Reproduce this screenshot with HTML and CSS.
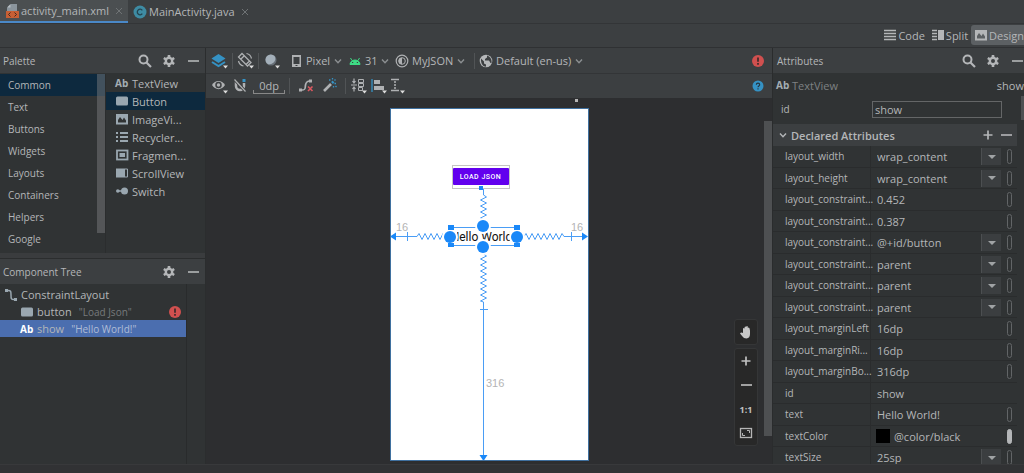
FILE: index.html
```html
<!DOCTYPE html>
<html lang="en">
<head>
  <meta charset="UTF-8" />
  <meta name="viewport" content="width=device-width, initial-scale=1.0"/>
  <title>activity_main.xml</title>
  <link rel="stylesheet" href="styles.css">
</head>
<body>
  <!-- shared icons -->
  <svg class="sprite" aria-hidden="true">
    <symbol id="search" viewBox="0 0 14 14"><circle cx="5.5" cy="5.5" r="4" fill="none" stroke="currentColor" stroke-width="2"/><path d="M8.5 8.5L13 13" stroke="currentColor" stroke-width="2.2"/></symbol>
    <symbol id="gear" viewBox="0 0 14 14"><path d="M7 3.500v-2.500M7 10.500v2.500M4 5.300L1.800 4M10 8.700l2.200 1.300M4 8.700L1.800 10M10 5.300L12.200 4" stroke="currentColor" stroke-width="2.6"/><circle cx="7" cy="7" r="3.2" fill="none" stroke="currentColor" stroke-width="2.4"/></symbol>
    <symbol id="minus" viewBox="0 0 14 14"><path d="M2 7h11" stroke="currentColor" stroke-width="1.6"/></symbol>
    <symbol id="plus" viewBox="0 0 14 14"><path d="M2.5 7h9M7 2.5v9" stroke="currentColor" stroke-width="1.7"/></symbol>
    <symbol id="chevron" viewBox="0 0 8 8"><path d="M1 2.5L4 5.8 7 2.5" fill="none" stroke="currentColor" stroke-width="1.4"/></symbol>
    <symbol id="close" viewBox="0 0 8 8"><path d="M1 1l6 6M7 1L1 7" stroke="currentColor" stroke-width="1"/></symbol>
    <symbol id="rect" viewBox="0 0 14 14"><rect x="1" y="2.5" width="12" height="9" rx="1.5" fill="currentColor"/></symbol>
    <symbol id="image" viewBox="0 0 14 14"><path fill-rule="evenodd" fill="currentColor" d="M1 2h12v10.500H1zM3 10.500h8V8.500L9 5.500 7.500 8 5 5 3 8z"/></symbol>
    <symbol id="error" viewBox="0 0 12 12"><circle cx="6" cy="6" r="6" fill="#d0504f"/><path d="M6 2.500v4.300M6 8v1.700" stroke="#3c2a2b" stroke-width="1.700"/></symbol>
  </svg>

  <nav class="tabs">
    <a href="#" class="tab active">
      <svg class="icon" viewBox="0 0 14 14"><path d="M6 0h6v7H2V4z" fill="#8a949c"/><path d="M2 3.500L5.500 0v3.500z" fill="#b4bcc2"/><rect x="1" y="7" width="13" height="7" fill="#c75f34"/><path d="M5.500 8.500L3.500 10.500l2 2M9.500 8.500l2 2-2 2" fill="none" stroke="#3c2a22"/></svg>
      <span>activity_main.xml</span>
      <svg class="close"><use href="#close"/></svg>
    </a>
    <a href="#" class="tab">
      <svg class="icon" viewBox="0 0 14 14"><circle cx="7" cy="7" r="6.500" fill="#3e8ba3"/><path d="M9.300 5.300a2.800 2.800 0 1 0 0 3.400" fill="none" stroke="#244450" stroke-width="1.300"/></svg>
      <span>MainActivity.java</span>
      <svg class="close"><use href="#close"/></svg>
    </a>
  </nav>

  <div class="modes">
    <button class="mode"><svg class="icon" viewBox="0 0 14 14"><path d="M1 2.500h12M1 5.500h12M1 8.500h12M1 11.500h12" stroke="currentColor" stroke-width="1.500"/></svg>Code</button>
    <button class="mode"><svg class="icon" viewBox="0 0 14 14"><path d="M1 2.500h5M1 5.500h5M1 8.500h5M1 11.500h5" stroke="currentColor" stroke-width="1.500"/><rect x="7" y="2" width="6" height="10" fill="currentColor"/></svg>Split</button>
    <button class="mode active"><svg class="icon"><use href="#image"/></svg>Design</button>
  </div>

  <main>
    <aside class="left">
      <section class="palette">
        <div class="panel-header">
          <h2>Palette</h2>
          <button aria-label="Search"><svg class="icon"><use href="#search"/></svg></button>
          <button aria-label="Settings"><svg class="icon"><use href="#gear"/></svg></button>
          <button aria-label="Hide"><svg class="icon"><use href="#minus"/></svg></button>
        </div>
        <div class="palette-body">
          <div class="categories">
            <button class="selected">Common</button>
            <button>Text</button>
            <button>Buttons</button>
            <button>Widgets</button>
            <button>Layouts</button>
            <button>Containers</button>
            <button>Helpers</button>
            <button>Google</button>
            <i class="thumb"></i>
          </div>
          <ul class="widgets">
            <li><b class="ab">Ab</b>TextView</li>
            <li class="selected"><svg class="icon"><use href="#rect"/></svg>Button</li>
            <li><svg class="icon"><use href="#image"/></svg>ImageVi...</li>
            <li><svg class="icon" viewBox="0 0 14 14"><path d="M1 3h2M5 3h8M1 7h2M5 7h8M1 11h2M5 11h8" stroke="currentColor" stroke-width="1.800"/></svg>Recycler...</li>
            <li><svg class="icon" viewBox="0 0 14 14"><rect x="2" y="2.500" width="10.500" height="9" fill="none" stroke="currentColor" stroke-width="1.800"/><rect x="4.500" y="5" width="5.500" height="4" fill="currentColor"/></svg>Fragmen...</li>
            <li><svg class="icon" viewBox="0 0 14 14"><rect x="1" y="2.500" width="9" height="9" fill="currentColor"/><path d="M10 3h2.500v8H10" fill="none" stroke="currentColor"/></svg>ScrollView</li>
            <li><svg class="icon" viewBox="0 0 14 14"><path d="M3 7h5" stroke="currentColor" stroke-width="1.500"/><circle cx="2.800" cy="7" r="1.800" fill="currentColor"/><circle cx="9.500" cy="7" r="3.500" fill="currentColor"/></svg>Switch</li>
          </ul>
        </div>
      </section>

      <section class="tree">
        <div class="panel-header">
          <h2>Component Tree</h2>
          <button aria-label="Settings"><svg class="icon"><use href="#gear"/></svg></button>
          <button aria-label="Hide"><svg class="icon"><use href="#minus"/></svg></button>
        </div>
        <ul class="tree-body">
          <li><svg class="icon" viewBox="0 0 14 14"><path d="M2 2.500h2c3 0 3 1 3 4.500s0 4.500 3 4.500h2" fill="none" stroke="currentColor" stroke-width="1.500"/><rect x="1" y="1" width="3" height="3" fill="currentColor"/><rect x="10" y="10" width="3" height="3" fill="currentColor"/></svg>ConstraintLayout</li>
          <li class="child"><svg class="icon"><use href="#rect"/></svg>button <small>"Load Json"</small><svg class="status"><use href="#error"/></svg></li>
          <li class="child selected"><b class="ab">Ab</b>show <small>"Hello World!"</small></li>
        </ul>
      </section>
    </aside>

    <section class="editor">
      <div class="toolbar">
        <button class="tool" aria-label="Design surface"><svg viewBox="0 0 18 18"><path d="M7.500 2L14.500 6.500 7.500 11 .5 6.500z" fill="#3592c4"/><path d="M1 10l6.500 4 6.500-4" fill="none" stroke="#3592c4" stroke-width="2"/><path d="M12 13.500h5l-2.500 3z" fill="#ddd"/></svg></button>
        <i class="sep"></i>
        <button class="tool" aria-label="Orientation"><svg viewBox="0 0 18 18"><path d="M5 1.500l9 9-3.500 3.500-9-9zM7 4L3.500 7.500M12.500 9L9 12.500" fill="none" stroke="#afb1b3" stroke-width="1.300"/><path d="M9.500 1.500a6.500 6.500 0 0 1 5 5M1.500 9a6.500 6.500 0 0 0 5 5" fill="none" stroke="#afb1b3" stroke-width="1.200"/><path d="M12 13.500h5l-2.500 3z" fill="#ddd"/></svg></button>
        <i class="sep"></i>
        <button class="tool" aria-label="Night mode"><svg viewBox="0 0 18 18"><circle cx="8" cy="8" r="5.500" fill="#687078"/><path d="M4 11.500A5 5 0 1 1 11.500 4a5.500 5.500 0 0 1-7.500 7.500z" fill="#a4b0ba"/><path d="M12 13.500h5l-2.500 3z" fill="#ddd"/></svg></button>
        <label class="picker pixel"><svg class="icon" viewBox="0 0 14 14"><path fill="#afb1b3" fill-rule="evenodd" d="M3 1h9v12H3zM4.500 3v7h6V3zM6.500 11v1h2v-1z"/></svg>
          <select aria-label="Device"><option>Pixel</option></select><svg class="chevron"><use href="#chevron"/></svg></label>
        <label class="picker"><svg class="icon" viewBox="0 0 14 14"><path d="M2 10.500a5 4.500 0 0 1 10 0zM4 6.500L2.500 4M10 6.500L11.500 4" fill="#3ddc84" stroke="#3ddc84"/><path d="M4 8.500h1.200M8.800 8.500H10" stroke="#3c3f41" stroke-width="1.200"/></svg>
          <select aria-label="API level"><option>31</option></select><svg class="chevron"><use href="#chevron"/></svg></label>
        <label class="picker"><svg class="icon" viewBox="0 0 14 14"><circle cx="7" cy="7" r="5.800" fill="none" stroke="#afb1b3" stroke-width="1.200"/><circle cx="7" cy="7" r="3.300" fill="none" stroke="#afb1b3"/><path d="M7 3.700v6.600a3.300 3.300 0 0 1 0-6.600z" fill="#afb1b3"/></svg>
          <select aria-label="Theme"><option>MyJSON</option></select><svg class="chevron"><use href="#chevron"/></svg></label>
        <i class="sep"></i>
        <label class="picker"><svg class="icon" viewBox="0 0 14 14"><circle cx="7" cy="7" r="6.300" fill="#b5b7b9"/><path d="M2 4.500l3 3v2l2 1v2.300C4 12.500 1.700 10 2 4.500zM8 1.500v2L6 5v1.500h4l1.500 2.500 1 0c.5-3-1-6.500-4.500-7.500z" fill="#3c3f41"/></svg>
          <select aria-label="Locale"><option>Default (en-us)</option></select><svg class="chevron"><use href="#chevron"/></svg></label>
        <svg class="status"><use href="#error"/></svg>
      </div>

      <div class="toolbar second">
        <button class="tool" aria-label="View options"><svg viewBox="0 0 18 18"><path d="M1 8c3-5.500 10-5.500 13 0-3 5.500-10 5.500-13 0z" fill="#afb1b3"/><circle cx="7.500" cy="8" r="2.500" fill="none" stroke="#3c3f41" stroke-width="1.500"/><path d="M12 13.500h5l-2.500 3z" fill="#ddd"/></svg></button>
        <button class="tool magnet" aria-label="Autoconnect"><svg viewBox="0 0 18 18"><path d="M4 4v5a4 4 0 0 0 8 0V6" fill="none" stroke="#afb1b3" stroke-width="2.500"/><path d="M2.500 2.500l11 12" stroke="#3c3f41" stroke-width="3"/><path d="M2.500 2.500l11 12" stroke="#afb1b3" stroke-width="1.200"/><rect x="10.500" y="2" width="3" height="3" fill="#3592c4"/></svg></button>
        <button class="margin">0dp</button>
        <i class="sep"></i>
        <button class="tool" aria-label="Clear constraints"><svg viewBox="0 0 18 18"><path d="M3 13h1c4 0 3-2 3.500-5S9 4 12 4h1" fill="none" stroke="#afb1b3" stroke-width="1.700"/><rect x="1" y="11.500" width="3" height="3" fill="#afb1b3"/><rect x="11" y="2.500" width="3" height="3" fill="#afb1b3"/><path d="M10 9.500l4.500 4.500M14.500 9.500L10 14" stroke="#db5860" stroke-width="1.600"/></svg></button>
        <button class="tool wand" aria-label="Infer constraints"><svg viewBox="0 0 18 18"><path d="M2 14l7-7" stroke="#afb1b3" stroke-width="2.600"/><path d="M10 6l1.500-1.500" stroke="#3592c4" stroke-width="2.500"/><path d="M7 3h1.500M10.500 1v1.500M13.500 2.500l-1 1M14 6.500h-1.500M11.500 9v1.500M13.500 9l1 1" stroke="#3592c4" stroke-width="1.300"/></svg></button>
        <i class="sep"></i>
        <button class="tool" aria-label="Pack"><svg viewBox="0 0 18 18"><path d="M1 8h6M4 1.500v4M4 10.500v4M2.500 4L4 6l1.500-2M2.500 12L4 10l1.500 2" fill="none" stroke="#afb1b3" stroke-width="1.200"/><path d="M8.500 2.500h5v3h-5zM8.500 6.500h5v3h-5zM8.500 10.500h4v3h-4z" fill="none" stroke="#afb1b3"/><path d="M12 13.500h5l-2.500 3z" fill="#ddd"/></svg></button>
        <button class="tool align" aria-label="Align"><svg viewBox="0 0 18 18"><path d="M2 2v13" stroke="#3592c4" stroke-width="1.300"/><path d="M4 3h6v4H4zM4 9h10v4H4z" fill="#afb1b3"/><path d="M12 13.500h5l-2.500 3z" fill="#ddd"/></svg></button>
        <button class="tool" aria-label="Guidelines"><svg viewBox="0 0 18 18"><path d="M3 2.500h8M3 13.500h8" stroke="#afb1b3" stroke-width="1.600"/><path d="M7 4v9" stroke="#afb1b3" stroke-width="1.500" stroke-dasharray="2 1"/><path d="M12 13.500h5l-2.500 3z" fill="#ddd"/></svg></button>
        <svg class="status" viewBox="0 0 12 12"><circle cx="6" cy="6" r="5.500" fill="#3592c4"/><path d="M4.300 4.800c0-2.200 3.400-2.200 3.400 0C7.700 6 6 6 6 7.300M6 8.300v1.200" fill="none" stroke="#26343f" stroke-width="1.100"/></svg>
      </div>

      <div class="canvas">
        <div class="phone">
          <i class="resize-dot"></i>
          <svg class="blueprint" viewBox="0 0 199 353">
            <rect x="62.500" y="57.500" width="57" height="23" fill="none" stroke="#c4c4c4"/>
            <g fill="none" stroke="#4a9df5">
              <path d="M93.500 81v6l3 2-6 3 6 3-6 3 6 3-6 3 6 3-6 3 3 1v3"/>
              <path d="M5 128.500h22l2-3 3 6 3-6 3 6 3-6 3 6 3-6 3 6 3-6 2 3M17.500 124v9"/>
              <path d="M134 128.500l2-3 3 6 3-6 3 6 3-6 3 6 3-6 3 6 3-6 3 6 3-6 3 6 3-6 2 3h22M181.500 124v9"/>
              <path d="M93.500 146l3 2-6 3 6 3-6 3 6 3-6 3 6 3-6 3 6 3-6 3 6 3-6 3 6 3-6 3 6 3-6 3 3 1V348M90 201.500h8"/>
              <path d="M58 119.500h71M58 137.500h71"/>
            </g>
            <text x="93" y="133" text-anchor="middle" class="hello">Hello World!</text>
            <g fill="#fff">
              <path d="M58 122h9v13h-9zM120 122h9v13h-9z"/>
              <circle cx="93" cy="118" r="8"/><circle cx="93" cy="139" r="8"/>
              <circle cx="60" cy="129" r="8"/><circle cx="127" cy="129" r="8"/>
            </g>
            <g fill="#1a88f8">
              <path d="M58 117h6v5h-6zM124 117h6v5h-6zM58 135h6v4h-6zM124 135h6v4h-6z"/>
              <rect x="89" y="78" width="4" height="4"/>
              <circle cx="93" cy="118" r="6"/><circle cx="93" cy="139" r="6"/>
              <circle cx="60" cy="129" r="6"/><circle cx="127" cy="129" r="6"/>
              <path d="M0 128.500l6-4v8zM198 128.500l-6-4v8zM93.500 353l-4-6h8z"/>
            </g>
            <g class="margins"><text x="6" y="123">16</text><text x="181" y="123">16</text><text x="96" y="279">316</text></g>
          </svg>
          <button class="load">LOAD JSON</button>
        </div>
        <i class="scroll"></i>
        <div class="zoom">
          <div class="zoom-group"><button aria-label="Pan"><svg class="icon" viewBox="0 0 14 14"><path d="M4 8V3.500q.8-1 1.600 0V2q.8-1 1.600 0v-.5q.8-1 1.600 0V3q.8-1 1.600 0l.6 2.500V9q0 4-3.500 4.500-3 0-4-2L1 8.500q1-1.500 3-.5z" fill="#c8c8c8"/></svg></button></div>
          <div class="zoom-group">
            <button aria-label="Zoom in"><svg class="icon"><use href="#plus"/></svg></button>
            <button aria-label="Zoom out"><svg class="icon"><use href="#minus"/></svg></button>
            <button>1:1</button>
            <button aria-label="Zoom to fit"><svg class="icon" viewBox="0 0 14 14"><rect x="1.500" y="2.500" width="11" height="9" fill="none" stroke="#b5b5b5" stroke-width="1.300"/><path d="M8 4.500h2.500V7M6 9.500H3.500V7" fill="none" stroke="#b5b5b5"/></svg></button>
          </div>
        </div>
      </div>
    </section>

    <aside class="attributes">
      <div class="panel-header">
        <h2>Attributes</h2>
        <button aria-label="Search"><svg class="icon"><use href="#search"/></svg></button>
        <button aria-label="Settings"><svg class="icon"><use href="#gear"/></svg></button>
        <button aria-label="Hide"><svg class="icon"><use href="#minus"/></svg></button>
      </div>
      <div class="component"><b class="ab">Ab</b><span>TextView</span><em>show</em></div>
      <div class="id-row"><label for="id">id</label><input type="text" id="id" value="show"></div>
      <div class="declared">
        <svg class="chevron"><use href="#chevron"/></svg>
        <h3>Declared Attributes</h3>
        <button aria-label="Add attribute"><svg class="icon"><use href="#plus"/></svg></button>
        <button aria-label="Remove attribute"><svg class="icon"><use href="#minus"/></svg></button>
      </div>
      <div class="attr-list">
        <div class="attr"><label for="a1">layout_width</label><select id="a1"><option>wrap_content</option></select><i class="arrow"></i><i class="pill"></i></div>
        <div class="attr"><label for="a2">layout_height</label><select id="a2"><option>wrap_content</option></select><i class="arrow"></i><i class="pill"></i></div>
        <div class="attr"><label for="a3">layout_constraint...</label><input id="a3" value="0.452"><i class="pill"></i></div>
        <div class="attr"><label for="a4">layout_constraint...</label><input id="a4" value="0.387"><i class="pill"></i></div>
        <div class="attr"><label for="a5">layout_constraint...</label><select id="a5"><option>@+id/button</option></select><i class="arrow"></i><i class="pill"></i></div>
        <div class="attr"><label for="a6">layout_constraint...</label><select id="a6"><option>parent</option></select><i class="arrow"></i><i class="pill"></i></div>
        <div class="attr"><label for="a7">layout_constraint...</label><select id="a7"><option>parent</option></select><i class="arrow"></i><i class="pill"></i></div>
        <div class="attr"><label for="a8">layout_constraint...</label><select id="a8"><option>parent</option></select><i class="arrow"></i><i class="pill"></i></div>
        <div class="attr"><label for="a9">layout_marginLeft</label><input id="a9" value="16dp"><i class="pill"></i></div>
        <div class="attr"><label for="a10">layout_marginRi...</label><input id="a10" value="16dp"><i class="pill"></i></div>
        <div class="attr"><label for="a11">layout_marginBo...</label><input id="a11" value="316dp"><i class="pill"></i></div>
        <div class="attr"><label for="a12">id</label><input id="a12" value="show"></div>
        <div class="attr"><label for="a13">text</label><input id="a13" value="Hello World!"><i class="pill"></i></div>
        <div class="attr"><label for="a14">textColor</label><i class="swatch"></i><input id="a14" value="@color/black"><i class="pill filled"></i></div>
        <div class="attr"><label for="a15">textSize</label><select id="a15"><option>25sp</option></select><i class="arrow"></i><i class="pill"></i></div>
      </div>
      <i class="edge-thumb"></i>
    </aside>
  </main>
  <footer></footer>
</body>
</html>
```

FILE: styles.css
```css
* {
  margin: 0;
  padding: 0;
  box-sizing: border-box;
}

body {
  height: 100vh;
  display: flex;
  flex-direction: column;
  overflow: hidden;
  background: #313335;
  color: #b4b6b8;
  font-family: 'Open Sans', 'Noto Sans', sans-serif;
  font-size: 11px;
}

button, input, select {
  font: inherit;
  color: inherit;
  background: none;
  border: none;
  appearance: none;
  outline: none;
}

ul {
  list-style: none;
}

svg {
  flex: none;
  display: block;
}

.sprite {
  position: absolute;
  width: 0;
  height: 0;
}

.icon {
  width: 14px;
  height: 14px;
}

.chevron, .close {
  width: 8px;
  height: 8px;
}

.status {
  width: 12px;
  height: 12px;
  margin-left: auto;
}

.ab {
  width: 14px;
  font-size: 10px;
  color: #a4adb3;
}

/* tabs */
.tabs {
  flex: none;
  display: flex;
  height: 24px;
  background: #3c3f41;
  border-bottom: 1px solid #333537;
}

.tab {
  display: flex;
  align-items: center;
  gap: 2px;
  padding: 0 5px;
  color: #b4b6b8;
  text-decoration: none;
}

.tab.active {
  background: #4b4f51;
  border-bottom: 2px solid #4a88c7;
}

.close {
  margin-left: 4px;
  color: #6f7375;
}

.modes {
  flex: none;
  display: flex;
  justify-content: flex-end;
  height: 24px;
  padding: 1px 0 2px;
  background: #3c3f41;
  border-bottom: 1px solid #2f3133;
}

.mode {
  display: flex;
  align-items: center;
  gap: 1px;
  padding: 0 3px;
}

.mode.active {
  padding-right: 0;
  background: #5c6063;
  border-radius: 3px 0 0 3px;
}

main {
  flex: 1;
  display: flex;
  min-height: 0;
}

footer {
  flex: none;
  height: 9px;
  background: #313234;
  border-top: 1px solid #38393b;
}

.panel-header {
  flex: none;
  display: flex;
  align-items: center;
  gap: 10px;
  height: 25px;
  padding: 0 5px 0 3px;
  background: #3c3f41;
}

.panel-header h2 {
  flex: 1;
  font-size: 10px;
  font-weight: normal;
}

/* left side */
.left {
  width: 206px;
  display: flex;
  flex-direction: column;
  border-right: 1px solid #2b2d2e;
  background: #303334;
}

.palette {
  border-bottom: 5px solid #3a3c3e;
}

.palette-body {
  display: flex;
  height: 180px;
  padding-top: 1px;
}

.categories {
  position: relative;
  width: 106px;
  border-right: 1px solid #2b2d2e;
}

.categories button {
  display: block;
  width: 100%;
  height: 22px;
  padding-left: 8px;
  font-size: 10px;
  text-align: left;
}

.categories .selected, .widgets .selected {
  background: #0d293e;
}

.thumb {
  position: absolute;
  top: 0;
  right: 0;
  width: 8px;
  height: 159px;
  background: rgba(120, 122, 124, 0.5);
}

.widgets {
  flex: 1;
}

.widgets li {
  display: flex;
  align-items: center;
  gap: 3px;
  height: 18px;
  padding-left: 9px;
}

.widgets .icon, .tree-body .icon {
  color: #9aa7b0;
}

.tree {
  flex: 1;
  display: flex;
  flex-direction: column;
  border-top: 1px solid #2b2d2e;
}

.tree-body {
  flex: 1;
  margin-right: 18px;
  padding-top: 2px;
  border-right: 1px solid #292b2c;
}

.tree-body li {
  display: flex;
  align-items: center;
  gap: 3px;
  height: 17px;
  padding: 0 5px 0 4px;
}

.tree-body .child {
  padding-left: 20px;
}

.tree-body small {
  margin-left: 4px;
  font-size: 10px;
  color: #777a7c;
}

.tree-body .selected {
  background: #4b6eaf;
}

.tree-body .selected .ab {
  color: #fff;
}

.tree-body .selected small {
  color: #b0bdd6;
}

/* design surface */
.editor {
  flex: 1;
  display: flex;
  flex-direction: column;
  min-width: 0;
}

.toolbar {
  flex: none;
  display: flex;
  align-items: center;
  height: 25px;
  padding: 0 8px 0 5px;
  background: #3c3f41;
}

.toolbar.second {
  border-top: 1px solid #333537;
}

.tool svg {
  width: 18px;
  height: 18px;
}

.sep {
  width: 1px;
  height: 16px;
  margin: 0 4px 0 3px;
  background: #515456;
}

.picker {
  display: flex;
  align-items: center;
  gap: 3px;
  margin-right: 6px;
}

.picker.pixel {
  margin-left: 8px;
}

.picker .chevron {
  color: #8b8f91;
}

.magnet {
  margin-left: 3px;
}

.margin {
  width: 32px;
  height: 16px;
  margin: 0 0 0 3px;
  line-height: 12px;
  border: 1px solid #777;
  border-top: none;
  border-image: linear-gradient(to top, #888 4px, transparent 4px) 1;
}

.margin + .sep {
  margin: 0 8px 0 4px;
}

.wand {
  margin: 0 2px 0 6px;
}

.align {
  margin-left: 2px;
}

.canvas {
  position: relative;
  flex: 1;
  padding-top: 10px;
  background: #2d2e30;
}

.phone {
  position: relative;
  width: 199px;
  height: 353px;
  margin: 0 auto;
  background: #fff;
  outline: 1px solid #3f709f;
  outline-offset: -1px;
}

.blueprint {
  width: 199px;
  height: 353px;
}

.hello {
  font: 12px Roboto, sans-serif;
  fill: #111;
}

.margins {
  font: 11px 'Liberation Sans', sans-serif;
  fill: #b4b4b4;
}

.load {
  position: absolute;
  left: 63px;
  top: 60px;
  width: 56px;
  height: 17px;
  background: #6200ee;
  border-radius: 1px;
  color: #fff;
  font: 500 7px Roboto, sans-serif;
  letter-spacing: 0.5px;
  white-space: nowrap;
}

.resize-dot {
  position: absolute;
  top: -9px;
  right: 11px;
  width: 3px;
  height: 3px;
  background: #b5b5b5;
}

.scroll {
  position: absolute;
  top: 23px;
  right: 0;
  bottom: 28px;
  width: 8px;
  background: #4e5052;
}

.zoom {
  position: absolute;
  right: 14px;
  bottom: 18px;
  width: 24px;
}

.zoom-group {
  display: flex;
  flex-direction: column;
  background: #282828;
  border: 1px solid #353637;
  border-radius: 3px;
  color: #c0c0c0;
}

.zoom-group + .zoom-group {
  margin-top: 3px;
}

.zoom-group button {
  display: flex;
  align-items: center;
  justify-content: center;
  height: 24px;
  font-size: 9px;
  font-weight: bold;
}

/* attributes */
.attributes {
  position: relative;
  width: 252px;
  display: flex;
  flex-direction: column;
  overflow: hidden;
  background: #303334;
  border-left: 1px solid #2a2c2d;
}

.attributes .panel-header {
  padding-left: 4px;
  padding-right: 0;
}

.component {
  flex: none;
  display: flex;
  align-items: center;
  gap: 2px;
  height: 24px;
  padding-left: 3px;
  white-space: nowrap;
}

.component span {
  flex: 1;
  color: #7e8183;
}

.component em {
  font-style: normal;
}

.id-row {
  flex: none;
  display: flex;
  align-items: center;
  height: 27px;
  padding: 0 12px 3px 8px;
}

.id-row label {
  flex: none;
  width: 91px;
  font-size: 10px;
}

.id-row input {
  width: 130px;
  height: 17px;
  padding-left: 2px;
  border: 1px solid #646667;
}

.declared {
  flex: none;
  display: flex;
  align-items: center;
  gap: 4px;
  height: 22px;
  margin-right: 7px;
  padding: 0 4px 0 6px;
  background: #3c3f41;
}

.declared h3 {
  flex: 1;
  font-size: 11px;
  font-weight: 600;
}

.attr-list {
  flex: none;
  margin-right: 7px;
}

.attr {
  display: flex;
  align-items: center;
  height: 22px;
  padding-right: 5px;
  border-bottom: 1px solid #2a2c2d;
}

.attr:nth-child(even) {
  height: 21px;
}

.attr label {
  flex: none;
  width: 98px;
  height: 100%;
  padding-left: 12px;
  border-right: 1px solid #2a2c2d;
  font-size: 10px;
  line-height: 20px;
}

.attr input, .attr select {
  flex: 1;
  min-width: 0;
  padding-left: 6px;
}

.arrow {
  display: flex;
  align-items: center;
  justify-content: center;
  width: 20px;
  height: 17px;
  margin-right: 6px;
  background: #3b3e40;
  border-left: 1px solid #4c4f51;
}

.arrow::after {
  content: '';
  border: 4px solid transparent;
  border-top-color: #a0a3a5;
  border-bottom: none;
}

.pill {
  width: 5px;
  height: 15px;
  border: 1px solid #626567;
  border-radius: 3px;
}

.pill.filled {
  background: #b4b6b8;
  border-color: #b4b6b8;
}

.swatch {
  width: 14px;
  height: 14px;
  margin-left: 5px;
  background: #000;
}

.attr .swatch + input {
  padding-left: 4px;
}

.edge-thumb {
  position: absolute;
  top: 48px;
  right: 0;
  width: 3px;
  height: 24px;
  background: #4e5052;
}
```
